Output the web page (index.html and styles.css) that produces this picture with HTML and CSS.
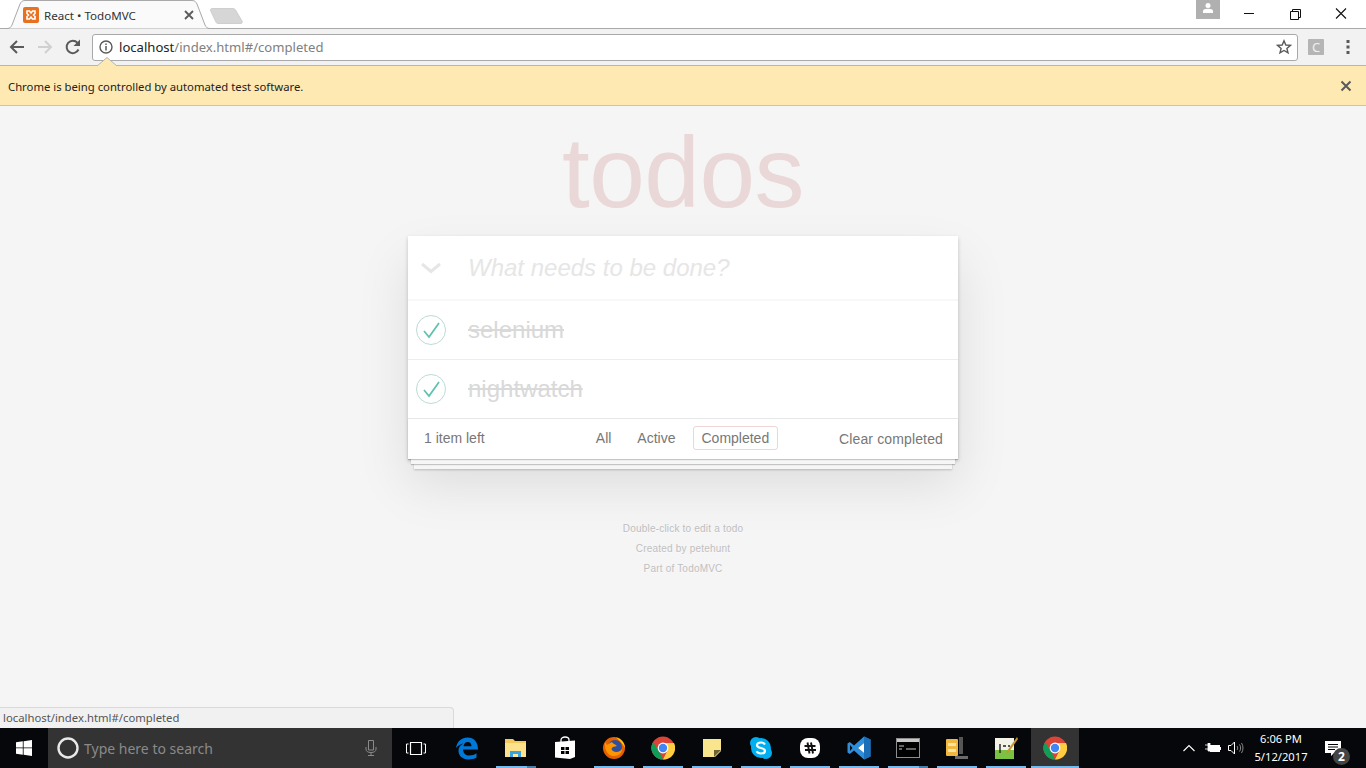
FILE: index.html
```html
<!DOCTYPE html>
<html lang="en">
<head>
    <meta charset="UTF-8">
    <title>React • TodoMVC</title>
    <link rel="stylesheet" href="styles.css">
</head>
<body>
    <svg class="defs" width="0" height="0">
        <symbol id="chrome" viewBox="0 0 24 24">
            <circle cx="12" cy="12" r="11.5" fill="#db4437"/>
            <path d="M12 12 L2 17.8 A11.5 11.5 0 0 1 2 6.2 L7 12z" fill="#db4437"/>
            <path d="M2.1 6.2 L8 15 L12 23.5 A11.5 11.5 0 0 1 2.1 6.2z" fill="#0f9d58"/>
            <path d="M12 7 H23 A11.5 11.5 0 0 1 12 23.5 L16.5 14.5z" fill="#ffcd40"/>
            <circle cx="12" cy="12" r="5.4" fill="#fff"/>
            <circle cx="12" cy="12" r="4.2" fill="#4285f4"/>
        </symbol>
    </svg>

    <div class="tabstrip">
        <div class="tab">
            <svg class="tab-shape" width="206" height="29" viewBox="0 0 206 29">
                <path d="M0 28.5 H3 C6 28.5 7 27 8 25 L16 4 C17 2 18 .5 21 .5 H188 C191 .5 192 2 193 4 L201 25 C202 27 203 28.5 206 28.5" fill="#fafafa" stroke="#a9a9a9"/>
            </svg>
            <svg class="favicon" width="16" height="16" viewBox="0 0 16 16">
                <rect width="16" height="16" rx="2" fill="#e8701f"/>
                <path d="M4 4 H6.5 L8 6 L9.5 4 H12 V6.5 L10.5 8 L12 9.5 V12 H9.5 L8 10 L6.5 12 H4 V9.5 L5.5 8 L4 6.5z" fill="none" stroke="#fff" stroke-width="1.6"/>
            </svg>
            <span class="tab-title">React • TodoMVC</span>
            <svg class="tab-close" width="10" height="10" viewBox="0 0 10 10">
                <path d="M1 1 L9 9 M9 1 L1 9" stroke="#5a5a5a" stroke-width="1.8"/>
            </svg>
        </div>
        <svg class="newtab" width="36" height="18" viewBox="0 0 36 18">
            <path d="M3 1.5 H24 C25 1.5 26 2 26.5 3 L33 14 C33.5 15.5 33 16.5 32 16.5 H9 C8 16.5 7.5 16 7 15 L1.5 3.5 C1 2.5 2 1.5 3 1.5z" fill="#d6d6d6" stroke="#cfcfcf"/>
        </svg>
        <div class="spacer"></div>
        <div class="avatar">
            <svg width="12" height="12" viewBox="0 0 12 12">
                <circle cx="6" cy="3.5" r="2.5" fill="#fff"/>
                <path d="M1 11 V9 C1 7.5 3 6.8 6 6.8 C9 6.8 11 7.5 11 9 V11z" fill="#fff"/>
            </svg>
        </div>
        <div class="winbtns">
            <svg class="winbtn" width="46" height="28" viewBox="0 0 46 28">
                <path d="M18 13.5 H28" stroke="#111"/>
            </svg>
            <svg class="winbtn" width="46" height="28" viewBox="0 0 46 28">
                <path d="M18.5 11.5 H26.5 V19.5 H18.5z M20.5 11.5 V9.5 H28.5 V17.5 H26.5" fill="none" stroke="#111"/>
            </svg>
            <svg class="winbtn" width="46" height="28" viewBox="0 0 46 28">
                <path d="M18 8.5 L28 18.5 M28 8.5 L18 18.5" stroke="#111" stroke-width="1.1"/>
            </svg>
        </div>
    </div>

    <div class="toolbar">
        <svg class="navicon" width="18" height="18" viewBox="0 0 18 18">
            <path d="M16 9 H3 M9 3 L3 9 L9 15" fill="none" stroke="#5a5a5a" stroke-width="2"/>
        </svg>
        <svg class="navicon" width="18" height="18" viewBox="0 0 18 18">
            <path d="M2 9 H15 M9 3 L15 9 L9 15" fill="none" stroke="#d0d0d0" stroke-width="2"/>
        </svg>
        <svg class="navicon" width="18" height="18" viewBox="0 0 18 18">
            <path d="M14.5 11.5 A6.2 6.2 0 1 1 13.5 4.8" fill="none" stroke="#5a5a5a" stroke-width="2"/>
            <path d="M16 1.5 V8 H9.5z" fill="#5a5a5a"/>
        </svg>
        <div class="omnibox">
            <svg class="info-icon" width="14" height="14" viewBox="0 0 14 14">
                <circle cx="7" cy="7" r="6" fill="none" stroke="#5a5a5a" stroke-width="1.4"/>
                <path d="M7 6 V10.5 M7 3.5 V5" stroke="#5a5a5a" stroke-width="1.5"/>
            </svg>
            <span class="url"><span class="url-host">localhost</span>/index.html#/completed</span>
            <svg class="star" width="16" height="16" viewBox="0 0 16 16">
                <path d="M8 1.8 L9.8 6 L14.4 6.4 L10.9 9.4 L12 13.9 L8 11.5 L4 13.9 L5.1 9.4 L1.6 6.4 L6.2 6z" fill="none" stroke="#5a5a5a" stroke-width="1.4"/>
            </svg>
        </div>
        <div class="ext-btn">C</div>
        <svg class="menu-dots" width="4" height="14" viewBox="0 0 4 14">
            <rect x=".5" y="0" width="3" height="3" fill="#5a5a5a"/>
            <rect x=".5" y="5.5" width="3" height="3" fill="#5a5a5a"/>
            <rect x=".5" y="11" width="3" height="3" fill="#5a5a5a"/>
        </svg>
    </div>

    <div class="infobar">
        <svg class="infobar-arrow" width="20" height="9" viewBox="0 0 20 9">
            <path d="M0 9 L10 0.5 L20 9" fill="#fee9b2" stroke="#b5b5b5"/>
        </svg>
        <span class="infobar-text">Chrome is being controlled by automated test software.</span>
        <svg class="infobar-close" width="12" height="12" viewBox="0 0 12 12">
            <path d="M1.5 1.5 L10.5 10.5 M10.5 1.5 L1.5 10.5" stroke="#5a5a5a" stroke-width="2"/>
        </svg>
    </div>

    <main class="page">
        <h1 class="title">todos</h1>
        <section class="todoapp">
            <header class="new-row">
                <svg class="toggle-all" width="22" height="12" viewBox="0 0 22 12">
                    <path d="M2 2 L11 9.5 L20 2" fill="none" stroke="#e6e6e6" stroke-width="3"/>
                </svg>
                <span class="placeholder">What needs to be done?</span>
            </header>
            <ul class="todo-list">
                <li class="todo">
                    <svg class="check" width="30" height="30" viewBox="0 0 30 30">
                        <circle cx="15" cy="15" r="14.5" fill="none" stroke="#bddad5"/>
                        <path d="M8 16 L13 22 L23 8" fill="none" stroke="#5dc2af" stroke-width="1.7"/>
                    </svg>
                    <span class="todo-label">selenium</span>
                </li>
                <li class="todo">
                    <svg class="check" width="30" height="30" viewBox="0 0 30 30">
                        <circle cx="15" cy="15" r="14.5" fill="none" stroke="#bddad5"/>
                        <path d="M8 16 L13 22 L23 8" fill="none" stroke="#5dc2af" stroke-width="1.7"/>
                    </svg>
                    <span class="todo-label">nightwatch</span>
                </li>
            </ul>
            <footer class="app-footer">
                <span class="count">1 item left</span>
                <ul class="filters">
                    <li class="filter">All</li>
                    <li class="filter">Active</li>
                    <li class="filter selected">Completed</li>
                </ul>
                <span class="clear">Clear completed</span>
            </footer>
        </section>
        <div class="info">
            <p>Double-click to edit a todo</p>
            <p>Created by petehunt</p>
            <p>Part of TodoMVC</p>
        </div>
        <div class="status-bubble">localhost/index.html#/completed</div>
    </main>

    <div class="taskbar">
        <div class="start">
            <svg width="16" height="16" viewBox="0 0 16 16">
                <path d="M0 2.3 L6.8 1.3 V7.5 H0z M7.6 1.2 L16 0 V7.5 H7.6z M0 8.3 H6.8 V14.7 L0 13.7z M7.6 8.3 H16 V16 L7.6 14.8z" fill="#fff"/>
            </svg>
        </div>
        <div class="search">
            <svg class="cortana" width="22" height="22" viewBox="0 0 22 22">
                <circle cx="11" cy="11" r="9.5" fill="none" stroke="#e8e8e8" stroke-width="2.4"/>
            </svg>
            <span class="search-text">Type here to search</span>
            <svg class="mic" width="12" height="16" viewBox="0 0 12 16">
                <path d="M3.5 .5 H8.5 V10 H3.5z M1 7 V9 C1 11.5 3 12.5 6 12.5 C9 12.5 11 11.5 11 9 V7 M6 12.5 V15.5 M3 15.5 H9" fill="none" stroke="#8a8a8a"/>
            </svg>
        </div>
        <div class="taskview">
            <svg width="20" height="13" viewBox="0 0 20 13">
                <path d="M4.5 .5 H15.5 V12.5 H4.5z" fill="none" stroke="#fff" stroke-width="1.2"/>
                <path d="M2.5 2 H.5 V11 H2.5 M17.5 2 H19.5 V11 H17.5" fill="none" stroke="#fff"/>
            </svg>
        </div>
        <div class="app-btn">
            <svg width="24" height="24" viewBox="0 0 24 24">
                <path d="M1 12 C2 5 7 1.5 12.5 1.5 C19 1.5 23 6 23 13.5 H8 C8.3 17.5 11 19.5 14 19.5 C17 19.5 19.5 18.7 21.5 17.3 V21.8 C19 23 16.5 23.5 13.5 23.5 C7 23.5 3 19 3.5 14 C3.7 11 5.5 9 8.5 7.5 C6 8 3 9.5 1 12z M8.5 10.2 H16.5 C16.5 7.5 15 6 12.5 6 C10.5 6 9 7.5 8.5 10.2z" fill="#0078d7" fill-rule="evenodd"/>
            </svg>
        </div>
        <div class="app-btn running multi">
            <svg width="22" height="20" viewBox="0 0 22 20">
                <path d="M0 1 H8 L10 3 H21 V19 H0z" fill="#f4c95d"/>
                <path d="M0 5 H21 V19 H0z" fill="#fde28b"/>
                <path d="M5 19 V13 H16 V19 H13 V16 H8 V19z" fill="#3ba4e0"/>
                <path d="M8 16 H13 V19 H8z" fill="#ffe79c"/>
            </svg>
        </div>
        <div class="app-btn">
            <svg width="22" height="24" viewBox="0 0 22 24">
                <path d="M7 6 V4 C7 2 9 1 11 1 C13 1 15 2 15 4 V6" fill="none" stroke="#fff" stroke-width="1.3"/>
                <path d="M1 6 L21 4.500 V21 L16 23 L1 21.500z" fill="#fff"/>
                <path d="M7 11 H10.500 V14 H7z M11.500 11 H15 V14 H11.500z M7 15 H10.500 V18 H7z M11.500 15 H15 V18 H11.500z" fill="#000"/>
            </svg>
        </div>
        <div class="app-btn running">
            <svg width="24" height="24" viewBox="0 0 24 24">
                <circle cx="12" cy="12" r="11" fill="#e66000"/>
                <circle cx="13" cy="11" r="7" fill="#2d4f9e"/>
                <path d="M3 6 C2 12 5 20 12 20 C17 20 20 17 20 13 C18 16 14 17 11 15 C9 14 9 12 11 11 L15 10 C13 8 11 8 10 6 C8 7 6 8 5 9 C4 8 4 7 3 6z" fill="#ff9500"/>
                <path d="M14 1.5 C19 2.5 23 7 23 12 C21 8 18 5 14 1.5z" fill="#ffcb00"/>
            </svg>
        </div>
        <div class="app-btn running">
            <svg width="24" height="24"><use href="#chrome"/></svg>
        </div>
        <div class="app-btn running">
            <svg width="20" height="20" viewBox="0 0 20 20">
                <path d="M1 1 H19 V13 L13 19 H1z" fill="#f8e58e"/>
                <path d="M12 19 V12 H19z" fill="#6b6338"/>
            </svg>
        </div>
        <div class="app-btn running">
            <svg width="24" height="24" viewBox="0 0 24 24">
                <circle cx="7" cy="7" r="6" fill="#00aff0"/>
                <circle cx="17" cy="17" r="6" fill="#00aff0"/>
                <circle cx="12" cy="12" r="10" fill="#00aff0"/>
                <path d="M16 8.5 C15 7 13.5 6.5 12 6.5 C10 6.5 8 7.5 8 9.3 C8 13 16 11 16 14.8 C16 16.5 14 17.5 12 17.5 C10 17.5 8.5 16.8 7.7 15.3" fill="none" stroke="#fff" stroke-width="2.2"/>
            </svg>
        </div>
        <div class="app-btn running">
            <svg width="22" height="22" viewBox="0 0 22 22">
                <rect x="1" y="1" width="20" height="20" rx="8" fill="#fff"/>
                <path d="M8.5 5.5 L10.5 16.5 M12 5.5 L14 16.5 M5.5 9 H16.5 M6 13 H17" stroke="#111" stroke-width="1.9"/>
            </svg>
        </div>
        <div class="app-btn running">
            <svg width="24" height="24" viewBox="0 0 24 24">
                <path d="M17 0.5 L23.5 3.5 V20.5 L17 23.5 L7 14.5 L2.8 18 L.5 16.5 V7.5 L2.8 6 L7 9.5z" fill="#2d8fdc"/>
                <path d="M17 7 L11 12 L17 17z M3 9 L5.5 12 L3 15z" fill="#0b0b0b"/>
                <path d="M17 .5 L23.5 3.5 V20.5 L17 23.5z" fill="#1b6fb8"/>
                <path d="M17 7 L11 12 L17 17z" fill="#fff"/>
            </svg>
        </div>
        <div class="app-btn running multi">
            <svg width="24" height="20" viewBox="0 0 24 20">
                <rect x=".5" y=".5" width="23" height="19" fill="#000" stroke="#8d8d8d"/>
                <rect x="1" y="1" width="22" height="3" fill="#c8c8c8"/>
                <path d="M3 8 H8 M3 11 H6 M10 11 H20" stroke="#c8c8c8"/>
            </svg>
        </div>
        <div class="app-btn running">
            <svg width="24" height="24" viewBox="0 0 24 24">
                <rect x="1" y="3" width="12" height="17" rx="1" fill="#f0b840"/>
                <path d="M3 7 H11 V10 H3z M3 13 H11 V16 H3z" fill="#fce3a0"/>
                <path d="M14 1 H18 V18 H14z" fill="#555"/>
                <path d="M10 20 H23 V23 H10z" fill="#6a6a6a"/>
            </svg>
        </div>
        <div class="app-btn running">
            <svg width="24" height="24" viewBox="0 0 24 24">
                <path d="M1 2 H20 V23 H1z" fill="#f3f3e8"/>
                <path d="M1 14 H20 V23 H1z" fill="#7cc242"/>
                <path d="M6 8 V17 M9 10 H12 M14 10 H16" stroke="#222" stroke-width="1.4"/>
                <path d="M23 1 L13 15 L12 18 L15 16 L24 3z" fill="#c9962e"/>
            </svg>
        </div>
        <div class="app-btn running active">
            <svg width="24" height="24"><use href="#chrome"/></svg>
        </div>
        <div class="spacer"></div>
        <div class="tray">
            <svg class="tray-chevron" width="12" height="8" viewBox="0 0 12 8">
                <path d="M.5 7 L6 1.5 L11.5 7" fill="none" stroke="#fff" stroke-width="1.1"/>
            </svg>
            <svg class="tray-battery" width="16" height="10" viewBox="0 0 16 10">
                <path d="M0 2 H3 M0 6 H3 M3 0 H5 V8 H3z" stroke="#fff" fill="#fff" stroke-width=".8"/>
                <rect x="5.500" y="2.500" width="9" height="6" fill="#fff" stroke="#fff"/>
                <rect x="15" y="4" width="1" height="3" fill="#fff"/>
            </svg>
            <svg class="tray-volume" width="16" height="14" viewBox="0 0 16 14">
                <path d="M.5 4.5 H3 L6.5 1 V13 L3 9.5 H.5z" fill="none" stroke="#fff"/>
                <path d="M9 5 C10 6.2 10 7.8 9 9 M11.5 3.5 C13 5.5 13 8.5 11.5 10.5 M13.5 2 C15.5 5 15.5 9 13.5 12" fill="none" stroke="#8a8a8a"/>
            </svg>
            <div class="clock">
                <span>6:06 PM</span>
                <span>5/12/2017</span>
            </div>
            <div class="notif">
                <svg width="16" height="15" viewBox="0 0 16 15">
                    <path d="M0 0 H16 V12 H9 L6 15 V12 H0z" fill="#fff"/>
                    <path d="M3 3.5 H13 M3 6 H13 M3 8.5 H10" stroke="#000"/>
                </svg>
                <span class="notif-count">2</span>
            </div>
        </div>
    </div>
</body>
</html>
```

FILE: styles.css
```css
html, body {
    margin: 0;
    height: 100%;
}
body {
    width: 1366px;
    height: 768px;
    display: flex;
    flex-direction: column;
    overflow: hidden;
    background: #f5f5f5;
    font-family: "Noto Sans", sans-serif;
}
svg {
    display: block;
    flex: none;
}
ul {
    list-style: none;
    margin: 0;
    padding: 0;
}
.defs {
    position: absolute;
}
.spacer {
    flex: 1;
}

/* browser chrome */
.tabstrip {
    height: 28px;
    display: flex;
    align-items: flex-start;
    background: #fff;
    border-bottom: 1px solid #a9a9a9;
}
.tab {
    position: relative;
    width: 206px;
    height: 28px;
    margin-left: 4px;
    display: flex;
    align-items: center;
    padding: 2px 16px 0 19px;
    box-sizing: border-box;
}
.tab-shape {
    position: absolute;
    left: 0;
    top: 0;
}
.favicon, .tab-title, .tab-close {
    position: relative;
}
.tab-title {
    flex: 1;
    margin-left: 5px;
    font-size: 11.6px;
    color: #333;
}
.newtab {
    margin: 7px 0 0 -1px;
}
.avatar {
    width: 24px;
    height: 19px;
    margin-right: 6px;
    background: #b0b0b0;
    display: flex;
    justify-content: center;
    padding-top: 2px;
    box-sizing: border-box;
}
.winbtns {
    display: flex;
    margin-right: 2px;
}
.toolbar {
    height: 36px;
    display: flex;
    align-items: center;
    background: #f2f2f2;
    border-bottom: 1px solid #b5b5b5;
}
.navicon {
    margin-left: 10px;
}
.toolbar .navicon:first-child {
    margin-left: 8px;
}
.omnibox {
    width: 1206px;
    height: 27px;
    margin-left: 10px;
    box-sizing: border-box;
    display: flex;
    align-items: center;
    background: #fff;
    border: 1px solid #a9a9a9;
    border-radius: 3px;
    padding: 0 5px 0 6px;
}
.url {
    flex: 1;
    margin-left: 6px;
    font-size: 13.1px;
    color: #808080;
}
.url-host {
    color: #222;
}
.ext-btn {
    width: 16px;
    height: 16px;
    margin-left: 10px;
    background: #b5b5b5;
    border-radius: 1px;
    color: #f0f0f0;
    font-size: 13px;
    line-height: 16px;
    text-align: center;
}
.menu-dots {
    margin-left: 22px;
}
.infobar {
    position: relative;
    height: 40px;
    box-sizing: border-box;
    display: flex;
    align-items: center;
    justify-content: space-between;
    padding: 0 14px 0 8px;
    background: #fee9b2;
    border-bottom: 1px solid #c4c4c4;
}
.infobar-arrow {
    position: absolute;
    left: 97px;
    top: -9px;
}
.infobar-text {
    padding-top: 2px;
    font-size: 11.3px;
    color: #222;
}

/* todo app */
.page {
    position: relative;
    flex: 1;
    font-family: "Liberation Sans", Arial, sans-serif;
    font-size: 14px;
    color: #4d4d4d;
}
.title {
    margin: 0;
    height: 130px;
    text-align: center;
    font-size: 100px;
    font-weight: 400;
    letter-spacing: -0.5px;
    line-height: 132px;
    color: rgba(175, 47, 47, 0.15);
}
.todoapp {
    position: relative;
    width: 550px;
    margin: 0 auto;
    background: #fff;
    box-shadow: 0 2px 4px 0 rgba(0, 0, 0, 0.2), 0 25px 50px 0 rgba(0, 0, 0, 0.1);
}
.new-row {
    height: 65px;
    box-sizing: border-box;
    padding-bottom: 2px;
    display: flex;
    align-items: center;
    box-shadow: inset 0 -2px 1px rgba(0, 0, 0, 0.03);
}
.toggle-all {
    margin-left: 12px;
}
.placeholder {
    margin-left: 26px;
    font-size: 24px;
    font-style: italic;
    color: #e6e6e6;
}
.todo {
    height: 58px;
    display: flex;
    align-items: center;
    border-bottom: 1px solid #ededed;
}
.check {
    margin-left: 8px;
}
.todo-label {
    margin-left: 22px;
    font-size: 24px;
    color: #d9d9d9;
    text-decoration: line-through;
}
.app-footer {
    position: relative;
    height: 41px;
    box-sizing: border-box;
    padding: 0 15px 2px 16px;
    display: grid;
    grid-template-columns: 1fr auto 1fr;
    align-items: center;
    color: #777;
    border-top: 1px solid #e6e6e6;
    margin-top: -1px;
}
.app-footer::before {
    content: "";
    position: absolute;
    left: 0;
    right: 0;
    bottom: 0;
    height: 40px;
    box-shadow: 0 1px 1px rgba(0, 0, 0, 0.2), 0 8px 0 -3px #f6f6f6, 0 9px 1px -3px rgba(0, 0, 0, 0.2), 0 16px 0 -6px #f6f6f6, 0 17px 2px -6px rgba(0, 0, 0, 0.2);
    z-index: 0;
}
.count, .filters, .clear {
    position: relative;
    z-index: 1;
}
.count {
    color: #777;
}
.filters {
    display: flex;
    gap: 10px;
    margin-right: 1px;
}
.filter {
    padding: 3px 7px;
    border: 1px solid transparent;
    border-radius: 3px;
    line-height: 16px;
}
.filter.selected {
    padding-right: 8px;
    border-color: rgba(175, 47, 47, 0.2);
}
.clear {
    justify-self: end;
    margin-top: 2px;
    letter-spacing: 0.14px;
}
.info {
    margin-top: 65px;
    text-align: center;
    font-size: 10px;
    letter-spacing: 0.2px;
    color: #bfbfbf;
    text-shadow: 0 1px 0 rgba(255, 255, 255, 0.5);
}
.info p {
    margin: 10px 0;
    line-height: 10px;
}
.status-bubble {
    position: absolute;
    left: 0;
    bottom: 0;
    width: 454px;
    height: 21px;
    box-sizing: border-box;
    padding-left: 3px;
    background: #f1f1f1;
    border: 1px solid #d9d9d9;
    border-width: 1px 1px 0 0;
    border-top-right-radius: 4px;
    font-family: "Noto Sans", sans-serif;
    font-size: 11.3px;
    line-height: 20px;
    color: #555;
}

/* windows taskbar */
.taskbar {
    height: 40px;
    display: flex;
    align-items: stretch;
    background: #05070a;
}
.start {
    width: 48px;
    display: flex;
    align-items: center;
    justify-content: center;
}
.search {
    width: 344px;
    display: flex;
    align-items: center;
    box-sizing: border-box;
    padding: 0 15px 0 9px;
    background: #333;
}
.search-text {
    flex: 1;
    margin-left: 5px;
    font-size: 14px;
    color: #8a8a8a;
}
.taskview {
    width: 50px;
    box-sizing: border-box;
    padding-right: 2px;
    display: flex;
    align-items: center;
    justify-content: center;
}
.app-btn {
    position: relative;
    width: 49px;
    display: flex;
    align-items: center;
    justify-content: center;
}
.app-btn.running::after {
    content: "";
    position: absolute;
    left: 5px;
    bottom: 0;
    width: 40px;
    height: 2px;
    background: #76b9ed;
}
.app-btn.multi::before {
    content: "";
    position: absolute;
    left: 36px;
    bottom: 0;
    width: 9px;
    height: 2px;
    background: #4a7ea8;
    z-index: 1;
}
.app-btn.active {
    background: #333;
    margin-left: 1px;
    width: 48px;
}
.app-btn.active::after {
    width: 48px;
    left: 0;
}
.tray {
    display: flex;
    align-items: center;
    color: #fff;
}
.tray-chevron {
    margin-right: 10px;
}
.tray-battery {
    margin-right: 7px;
}
.tray-volume {
    margin-right: 6px;
}
.clock {
    width: 62px;
    display: flex;
    flex-direction: column;
    align-items: center;
    font-size: 11.2px;
    line-height: 18px;
}
.notif {
    position: relative;
    margin: 0 25px 0 13px;
}
.notif-count {
    position: absolute;
    right: -9px;
    bottom: -9px;
    width: 17px;
    height: 17px;
    border-radius: 50%;
    background: #444;
    font-size: 12px;
    font-weight: 700;
    line-height: 17px;
    text-align: center;
}
```
